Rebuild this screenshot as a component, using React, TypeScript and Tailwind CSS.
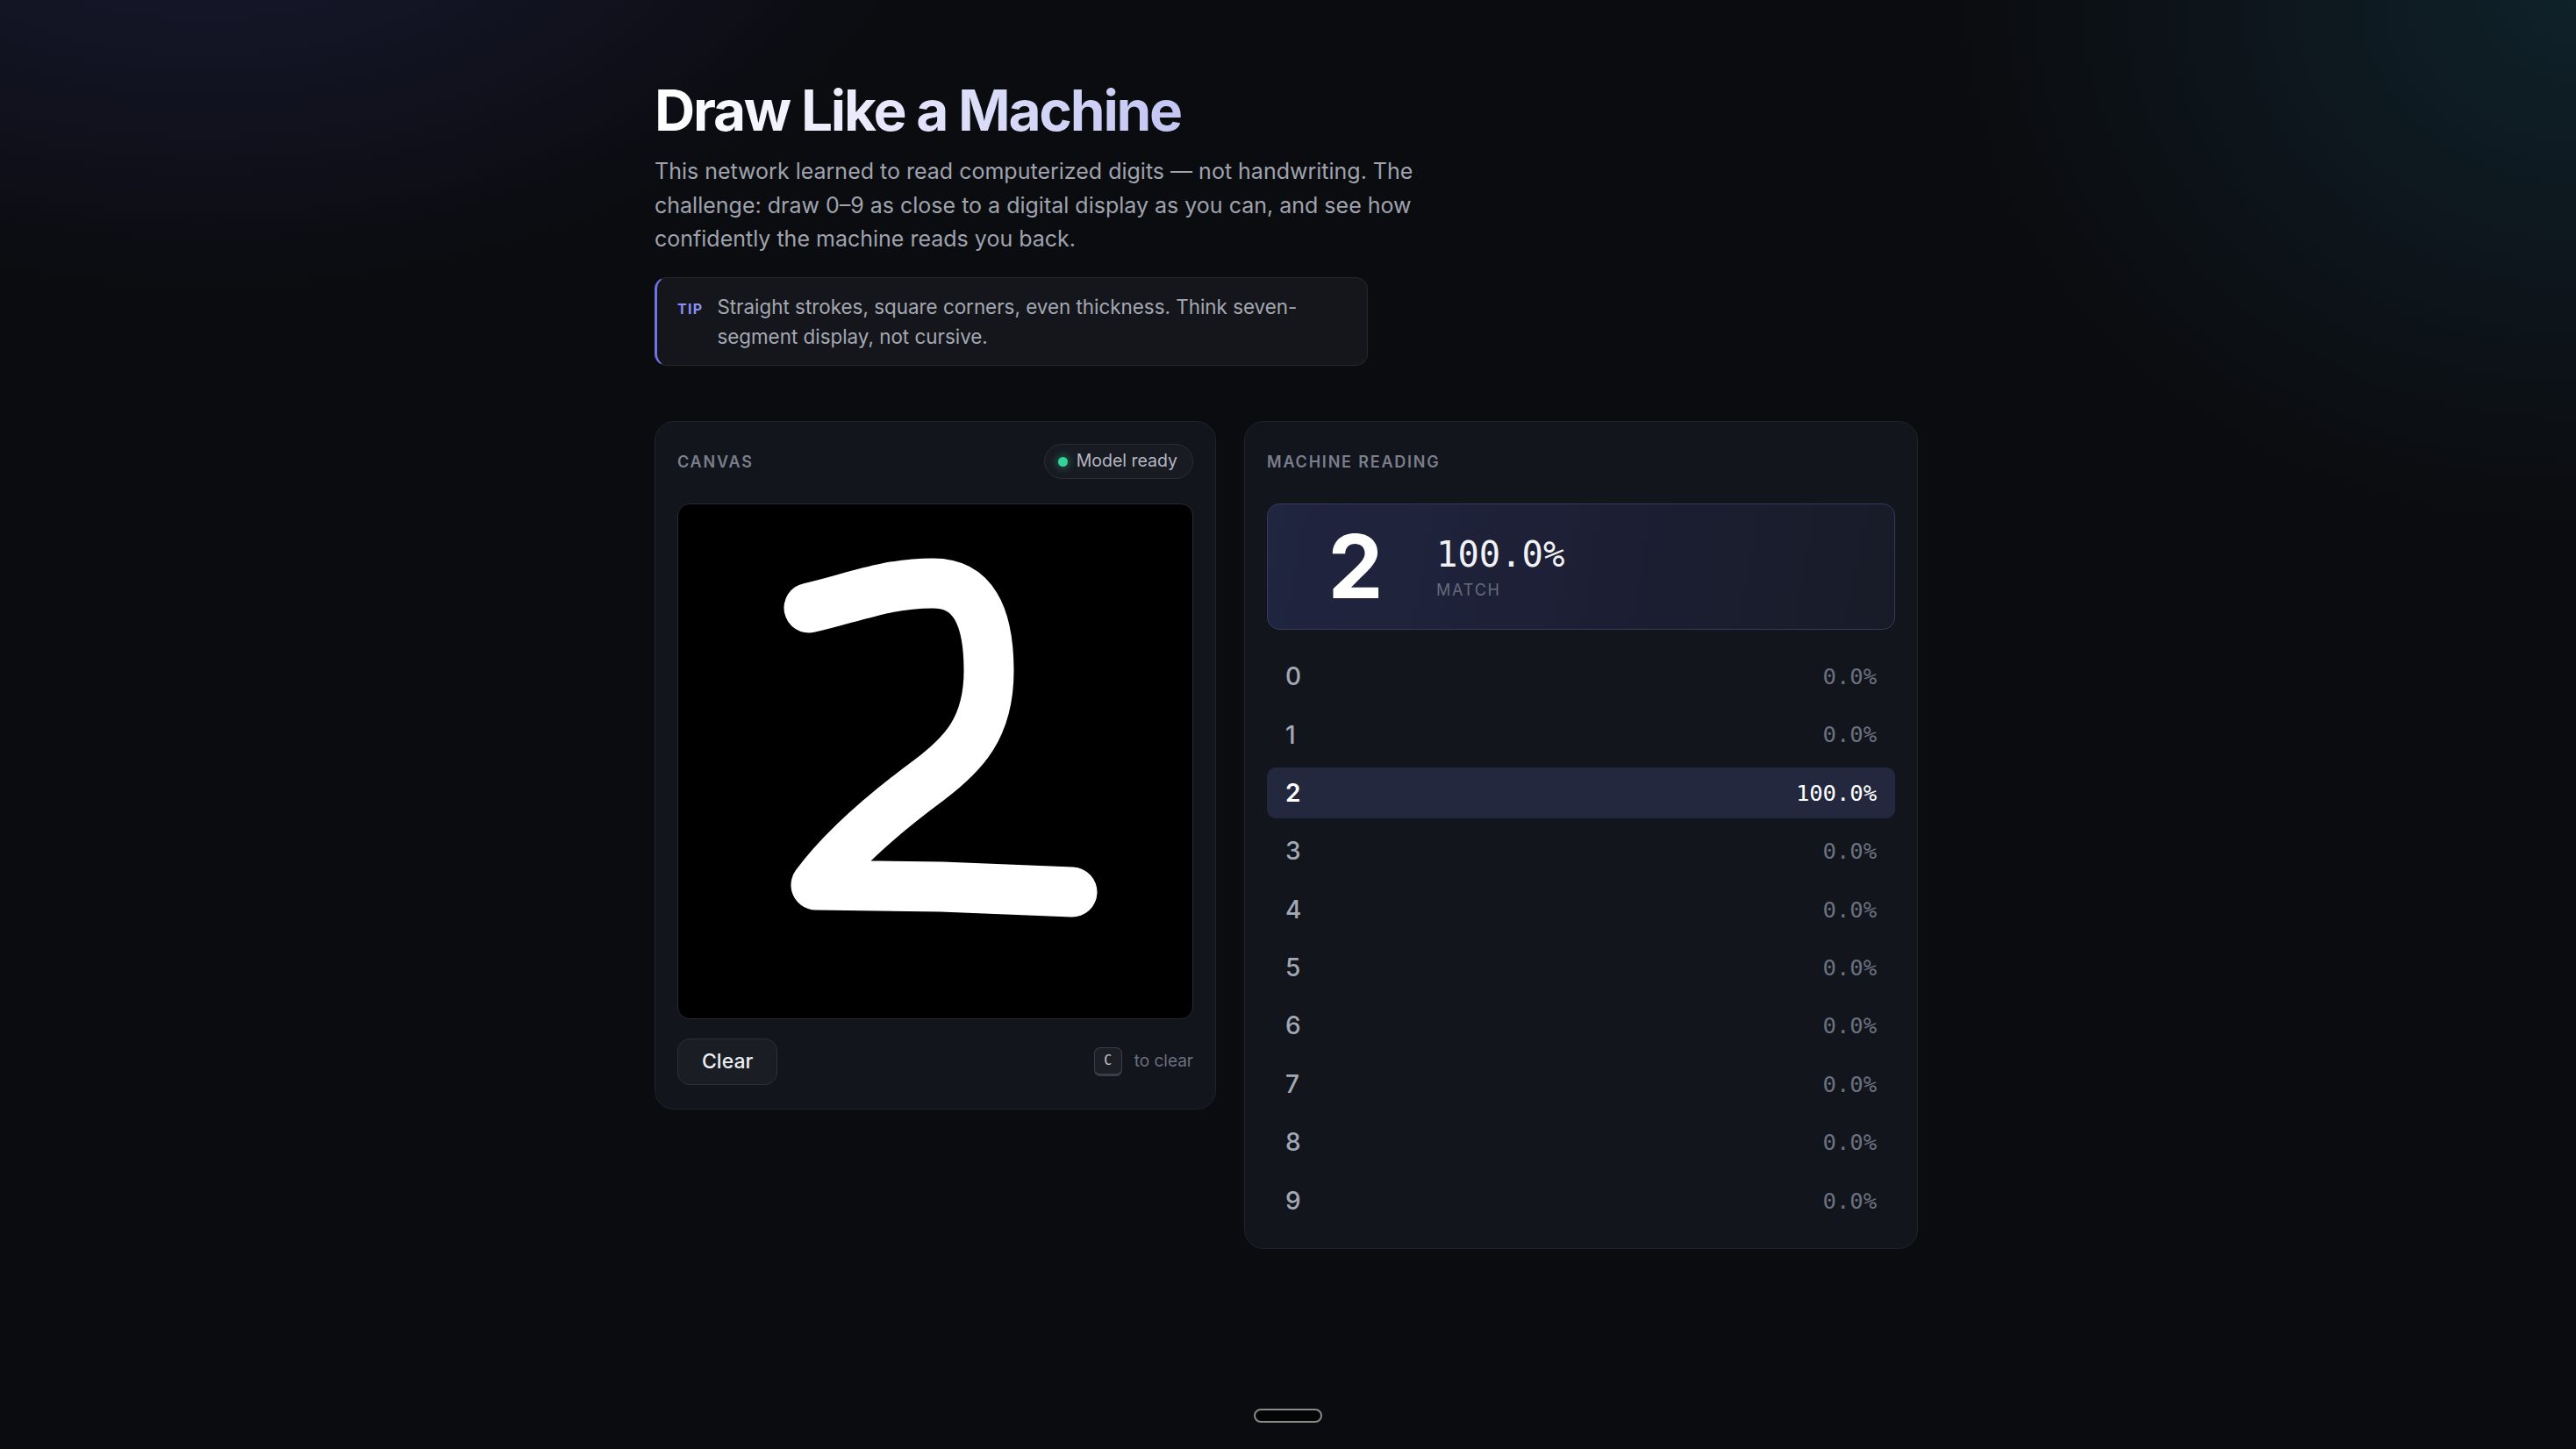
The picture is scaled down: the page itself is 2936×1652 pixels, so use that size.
import React from 'react';

const scores = [0, 0, 100, 0, 0, 0, 0, 0, 0, 0];

function DigitRow({ digit, value, active }: { digit: number; value: number; active: boolean }) {
  return (
    <div
      className={
        active
          ? 'flex h-[58px] items-center justify-between rounded-[10px] bg-[#24283f] px-[21px]'
          : 'flex h-[58px] items-center justify-between rounded-[10px] px-[21px]'
      }
    >
      <span className={active ? 'text-[28px] font-semibold text-white' : 'text-[28px] font-medium text-[#a3a8b5]'}>
        {digit}
      </span>
      <span
        className={
          active
            ? "font-['DejaVu_Sans_Mono',monospace] text-[25.5px] text-white"
            : "font-['DejaVu_Sans_Mono',monospace] text-[25.5px] text-[#6b7080]"
        }
      >
        {value.toFixed(1)}%
      </span>
    </div>
  );
}

function CanvasCard() {
  return (
    <section className="rounded-[22px] border border-[#1f232b] bg-[#12151c] px-[25px] pb-[27px] pt-[25px]">
      <div className="flex h-[40px] items-center justify-between">
        <span className="text-[18px] font-semibold uppercase tracking-[0.1em] text-[#7a7f8c]">Canvas</span>
        <span className="flex h-[40px] items-center gap-[10px] rounded-full border border-[#2a2e37] bg-[#181b22] pl-[15px] pr-[17px] text-[19.5px] text-[#b3b7c2]">
          <span className="h-[11px] w-[11px] rounded-full bg-[#34d399] shadow-[0_0_8px_2px_rgba(52,211,153,0.35)]" />
          Model ready
        </span>
      </div>

      <div className="mt-[28px] aspect-square w-full overflow-hidden rounded-[14px] border border-[#262a33] bg-black">
        <svg viewBox="0 0 586 586" className="h-full w-full">
          <path
            d="M149 118 C 195 108, 235 90, 290 90 C 335 90, 354 125, 354 190 C 354 255, 325 285, 285 315 C 235 352, 188 392, 157 434 L 300 436 L 449 442"
            fill="none"
            stroke="#ffffff"
            strokeWidth="57"
            strokeLinecap="round"
            strokeLinejoin="round"
          />
        </svg>
      </div>

      <div className="mt-[22px] flex items-center justify-between">
        <button className="h-[53px] rounded-[14px] border border-[#2c3038] bg-[#1a1d24] px-[27px] text-[23px] font-medium text-[#eceef2]">
          Clear
        </button>
        <div className="flex items-center gap-[14px]">
          <kbd className="flex h-[33px] w-[32px] items-center justify-center rounded-[7px] border border-b-[3px] border-[#3a3e48] bg-[#1c1f26] font-['DejaVu_Sans_Mono',monospace] text-[15px] text-[#c3c7cf]">
            C
          </kbd>
          <span className="text-[19px] text-[#6b7080]">to clear</span>
        </div>
      </div>
    </section>
  );
}

function ReadingCard() {
  return (
    <section className="rounded-[22px] border border-[#1f232b] bg-[#12151c] p-[25px]">
      <div className="flex h-[40px] items-center">
        <span className="text-[18px] font-semibold uppercase tracking-[0.1em] text-[#7a7f8c]">Machine reading</span>
      </div>

      <div className="mt-[28px] flex h-[144px] items-center rounded-[14px] border border-[#333a5c] bg-[linear-gradient(100deg,#202540_0%,#1d2036_45%,#181b27_100%)] px-[36px]">
        <div className="w-[128px] text-center text-[100px] font-bold leading-none text-white">2</div>
        <div className="ml-[28px] flex flex-col pt-[4px]">
          <span className="font-['DejaVu_Sans_Mono',monospace] text-[40.5px] leading-[1.1] text-[#f1f2f6]">100.0%</span>
          <span className="mt-[5px] text-[18px] uppercase tracking-[0.1em] text-[#666b7c]">Match</span>
        </div>
      </div>

      <div className="mt-[24px] flex flex-col gap-[8.4px]">
        {scores.map((v, i) => (
          <DigitRow key={i} digit={i} value={v} active={v === 100} />
        ))}
      </div>
    </section>
  );
}

export default function App() {
  return (
    <div className="flex min-h-screen flex-col bg-[#0b0c10] bg-[radial-gradient(ellipse_1200px_750px_at_8%_-12%,#1a1c36_0%,rgba(11,12,16,0)_70%),radial-gradient(ellipse_1000px_850px_at_100%_0%,#0f2129_0%,rgba(11,12,16,0)_70%)] font-['Inter',sans-serif]">
      <main className="mx-auto w-[1440px] -translate-x-[2px] pt-[91px]">
        <h1 className="w-fit bg-[linear-gradient(90deg,#ffffff_0%,#e6e7fb_45%,#c3c5f3_100%)] bg-clip-text text-[64px] font-bold leading-[1.1] tracking-[-0.035em] text-transparent">
          Draw Like a Machine
        </h1>
        <p className="mt-[15px] max-w-[880px] text-[25px] leading-[1.54] text-[#9fa3ae]">
          This network learned to read computerized digits — not handwriting. The challenge: draw 0–9 as close to a
          digital display as you can, and see how confidently the machine reads you back.
        </p>

        <div className="mt-[24px] flex w-[813px] items-start gap-[16px] rounded-[14px] border border-l-[3px] border-[#25272e] border-l-[#6d74e0] bg-[#14161b] py-[16px] pl-[23px] pr-[26px]">
          <span className="pt-[7px] text-[16px] font-bold uppercase tracking-[0.08em] text-[#8b90f5]">Tip</span>
          <p className="text-[22.4px] leading-[1.5] text-[#a4a8b3]">
            Straight strokes, square corners, even thickness. Think seven-segment display, not cursive.
          </p>
        </div>

        <div className="mt-[63px] grid grid-cols-[640px_1fr] items-start gap-[32px]">
          <CanvasCard />
          <ReadingCard />
        </div>
      </main>

      <div className="mx-auto mb-[30px] mt-auto h-[16px] w-[78px] rounded-full border-2 border-[#8a8a8a] bg-[#050505]" />
    </div>
  );
}
